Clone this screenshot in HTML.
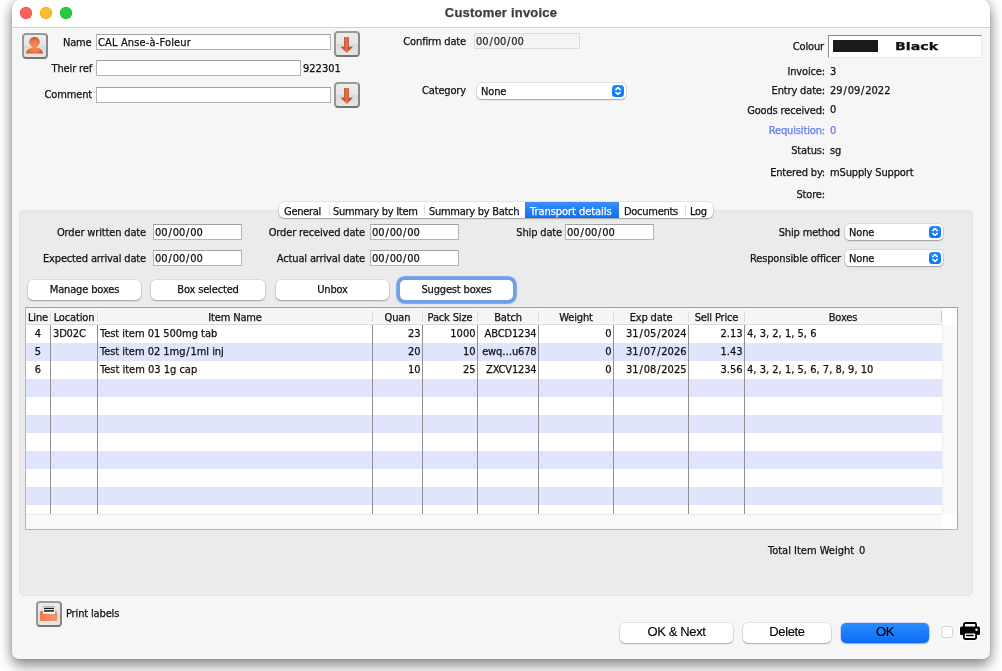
<!DOCTYPE html>
<html><head><meta charset="utf-8"><title>Customer invoice</title>
<style>
*{box-sizing:border-box;margin:0;padding:0}
html,body{width:1002px;height:671px;overflow:hidden;background:#fff}
body{position:relative;font-family:"DejaVu Sans Condensed","DejaVu Sans","Liberation Sans",sans-serif;font-size:11px;color:#111;letter-spacing:-.15px;-webkit-text-stroke:.25px}
.a{position:absolute;white-space:nowrap}
#win{will-change:transform;position:absolute;left:12px;top:0;width:978px;height:659px;background:#f6f6f6;border-radius:7px 7px 7px 7px/10px 10px 7px 7px;
 box-shadow:0 0 0 .5px rgba(0,0,0,.10),0 8px 13px rgba(0,0,0,.34),0 0 14px rgba(0,0,0,.27)}
#tb{position:absolute;left:0;top:0;width:978px;height:28px;background:#fff;border-radius:7px 7px 0 0/10px 10px 0 0;border-bottom:1px solid #d1d1d1}
#title{position:absolute;left:0;width:978px;top:5px;text-align:center;font:bold 13px "Liberation Sans",sans-serif;color:#3d3d3d;letter-spacing:.2px}
.tl{position:absolute;top:7px;width:12px;height:12px;border-radius:50%}
.l{position:absolute;white-space:nowrap;text-align:right;line-height:14px;height:14px;margin-top:1px}
.v{position:absolute;white-space:nowrap;line-height:14px;height:14px;margin-top:1px}
.in{position:absolute;background:#fff;border:1px solid #b4b4b4;border-top-color:#a2a2a2;height:16px;line-height:14px;padding:1px 0 0 1px;white-space:nowrap}
.sel{position:absolute;background:#fff;border-radius:4.5px;height:16px;line-height:14px;padding:2px 0 0 4px;box-shadow:0 0 0 .5px rgba(0,0,0,.16),0 1px 1.5px rgba(0,0,0,.28)}
.sel i{position:absolute;right:2px;top:2px;width:12px;height:12px;border-radius:3.500px;background:linear-gradient(#2489ff,#0a75fa)}
.sel i svg{position:absolute;left:0;top:0}
.ib{position:absolute;width:26px;height:25.500px;border-radius:4px;border:2px solid;border-color:#9a9a9a #888 #747474 #969696;background:linear-gradient(#ececec,#e4e4e4 48%,#d9d9d9 52%,#e6e6e6)}
.ib svg{position:absolute;left:0;top:0}
.btn{position:absolute;background:#fff;border-radius:5px;height:20px;line-height:20px;text-align:center;box-shadow:0 0 0 .5px rgba(0,0,0,.14),0 1px 1.5px rgba(0,0,0,.26)}
.hb{font:13px "Liberation Sans",sans-serif;color:#000;height:20.500px;line-height:18px;letter-spacing:-.38px;-webkit-text-stroke:.12px}
#panel{position:absolute;left:7px;top:210px;width:954px;height:386px;background:#ebebeb;border:1px solid #e3e3e3;border-radius:5px}
#tabs{position:absolute;left:267px;top:202px;width:433.500px;height:16px;background:#fff;border-radius:5px;box-shadow:0 0 0 .5px rgba(0,0,0,.14),0 1px 1.5px rgba(0,0,0,.26)}
#tabs span{position:absolute;top:3px;height:14px;line-height:14px;white-space:nowrap;letter-spacing:-.28px}
#tabs em{position:absolute;top:0;height:16px;background:linear-gradient(#3a8ffa,#0d6ff5)}
#tabs b{position:absolute;top:3px;width:1px;height:10px;background:#dcdcdc}
#tbl{position:absolute;left:13px;top:307px;width:933px;height:223px;background:#fff;border:1px solid #b4b4b4;border-top-color:#a0a0a0;border-right-color:#a6a6a6}
.n{letter-spacing:0}
u{text-decoration:none;margin:0 .85px}
.row{position:absolute;left:0;width:916px;height:18px}
.bl{background:#e0e4fc}
.cs{position:absolute;top:17px;width:1px;height:189px;background:#8f8f8f}
.hs{position:absolute;top:3px;width:1px;height:11px;background:#dedede}
.h{position:absolute;top:3px;line-height:14px;text-align:center;white-space:nowrap}
.c{position:absolute;line-height:14px;white-space:nowrap}
</style></head><body>
<div id="win">
<div id="tb">
 <div class="tl" style="left:8px;background:#fe5f57;box-shadow:inset 0 0 0 .5px #e0443e"></div>
 <div class="tl" style="left:28px;background:#febc2e;box-shadow:inset 0 0 0 .5px #dea123"></div>
 <div class="tl" style="left:48px;background:#28c840;box-shadow:inset 0 0 0 .5px #1aab29"></div>
 <div id="title">Customer invoice</div>
</div>
<div class="ib" style="left:10px;top:33px"><svg width="22" height="22" viewBox="0 0 22 22"><defs><radialGradient id="og" gradientUnits="userSpaceOnUse" cx="10.500" cy="11.500" r="10"><stop offset="0" stop-color="#f48e5a"/><stop offset=".55" stop-color="#ec7d4a"/><stop offset="1" stop-color="#c65026"/></radialGradient></defs><path d="M2.200 18.600C2.200 15.300 4.300 13.700 7 13 8 12.700 8.600 12.300 8.500 11.700 6.500 10.800 5.200 9.100 5.200 7 5.200 4.100 7.600 1.900 10.500 1.900S15.800 4.100 15.800 7C15.800 9.100 14.500 10.800 12.500 11.700 12.400 12.300 13 12.700 14 13 16.700 13.700 18.900 15.300 18.900 18.600z" fill="url(#og)"/></svg></div>
<svg width="0" height="0" style="position:absolute"><defs><linearGradient id="ag" gradientUnits="userSpaceOnUse" x1="7.500" y1="0" x2="13.500" y2="0"><stop offset="0" stop-color="#b9452a"/><stop offset=".5" stop-color="#e5744f"/><stop offset="1" stop-color="#c24c2c"/></linearGradient></defs></svg>
<div class="l" style="left:0;width:79.500px;top:35px">Name</div>
<div class="in" style="left:84px;top:34px;width:235px;letter-spacing:.15px">CAL Anse-à-Foleur</div>
<div class="ib" style="left:322px;top:31px"><svg width="22" height="22" viewBox="0 0 22 22"><path d="M8.100 4.100h4.800v9.700l4.200-.400-6.300 6.600-6.300-6.600 3.600.400z" fill="url(#ag)"/></svg></div>
<div class="l" style="left:0;width:80px;top:61px">Their ref</div>
<div class="in" style="left:84px;top:60px;width:205px"></div>
<div class="v n" style="left:291px;top:61px">922301</div>
<div class="l" style="left:0;width:80px;top:87px">Comment</div>
<div class="in" style="left:84px;top:87px;width:235px"></div>
<div class="ib" style="left:322px;top:82px"><svg width="22" height="22" viewBox="0 0 22 22"><path d="M8.100 4.100h4.800v9.700l4.200-.400-6.300 6.600-6.300-6.600 3.600.400z" fill="url(#ag)"/></svg></div>

<div class="l" style="left:354px;width:100px;top:34px">Confirm date</div>
<div class="in" style="left:462px;top:33px;width:106px;height:16px;background:#f4f4f4;border-color:#dcdcdc;color:#2a2a2a;letter-spacing:0">00<u>/</u>00<u>/</u>00</div>
<div class="l" style="left:354px;width:100px;top:83px">Category</div>
<div class="sel" style="left:465px;top:83px;width:149px">None<i><svg width="12" height="12" viewBox="0 0 12 12"><path d="M3.800 4.600L6 2.600l2.200 2M3.800 7.400L6 9.400l2.200-2" fill="none" stroke="#fff" stroke-width="1.500" stroke-linecap="round" stroke-linejoin="round"/></svg></i></div>

<div class="l" style="left:713px;width:99px;top:39px">Colour</div>
<div class="a" style="left:816px;top:35px;width:154px;height:22.500px;background:#fff;border:1px solid #ececec;border-top-color:#8c8c8c;border-left-color:#8c8c8c"></div>
<div class="a" style="left:821px;top:40px;width:45px;height:12px;background:#1b1a1c"></div>
<div class="a" style="left:883px;top:40px;font:bold 11px 'DejaVu Sans',sans-serif;line-height:14px;color:#111;letter-spacing:0;transform:scaleX(1.29);transform-origin:0 0">Black</div>
<div class="l" style="left:713px;width:100px;top:64px">Invoice:</div><div class="v" style="left:818px;top:64px">3</div>
<div class="l" style="left:713px;width:100px;top:83px">Entry date:</div><div class="v n" style="left:818px;top:83px">29<u>/</u>09<u>/</u>2022</div>
<div class="l" style="left:713px;width:100px;top:103px">Goods received:</div><div class="v" style="left:818px;top:102px">0</div>
<div class="l" style="left:713px;width:100px;top:123px;color:#5f7fea">Requisition:</div><div class="v" style="left:818px;top:123px;color:#5f7fea">0</div>
<div class="l" style="left:713px;width:100px;top:143px">Status:</div><div class="v" style="left:818px;top:143px">sg</div>
<div class="l" style="left:713px;width:100px;top:165px">Entered by:</div><div class="v" style="left:818px;top:165px">mSupply Support</div>
<div class="l" style="left:713px;width:100px;top:187px">Store:</div>

<div id="panel"></div>
<div id="tabs">
 <span style="left:5px">General</span><b style="left:50px"></b>
 <span style="left:54px">Summary by Item</span><b style="left:145px"></b>
 <span style="left:150px">Summary by Batch</span>
 <em style="left:246px;width:94px"></em><span style="left:251px;color:#fff;letter-spacing:-.05px">Transport details</span>
 <span style="left:345px">Documents</span><b style="left:406px"></b>
 <span style="left:411px">Log</span>
</div>
<div class="l" style="left:20px;width:114px;top:225px">Order written date</div>
<div class="in" style="left:141px;top:224px;width:89px;letter-spacing:0">00<u>/</u>00<u>/</u>00</div>
<div class="l" style="left:20px;width:114px;top:251px">Expected arrival date</div>
<div class="in" style="left:141px;top:250px;width:89px;letter-spacing:0">00<u>/</u>00<u>/</u>00</div>
<div class="l" style="left:233px;width:120px;top:225px">Order received date</div>
<div class="in" style="left:358px;top:224px;width:89px;letter-spacing:0">00<u>/</u>00<u>/</u>00</div>
<div class="l" style="left:233px;width:120px;top:251px">Actual arrival date</div>
<div class="in" style="left:358px;top:250px;width:89px;letter-spacing:0">00<u>/</u>00<u>/</u>00</div>
<div class="l" style="left:450px;width:100px;top:225px">Ship date</div>
<div class="in" style="left:553px;top:224px;width:89px;letter-spacing:0">00<u>/</u>00<u>/</u>00</div>
<div class="l" style="left:708px;width:120px;top:225px">Ship method</div>
<div class="sel" style="left:833px;top:224px;width:98px">None<i><svg width="12" height="12" viewBox="0 0 12 12"><path d="M3.800 4.600L6 2.600l2.200 2M3.800 7.400L6 9.400l2.200-2" fill="none" stroke="#fff" stroke-width="1.500" stroke-linecap="round" stroke-linejoin="round"/></svg></i></div>
<div class="l" style="left:708px;width:121px;top:251px">Responsible officer</div>
<div class="sel" style="left:833px;top:250px;width:98px">None<i><svg width="12" height="12" viewBox="0 0 12 12"><path d="M3.800 4.600L6 2.600l2.200 2M3.800 7.400L6 9.400l2.200-2" fill="none" stroke="#fff" stroke-width="1.500" stroke-linecap="round" stroke-linejoin="round"/></svg></i></div>

<div class="btn" style="left:16px;top:280px;width:113px">Manage boxes</div>
<div class="btn" style="left:139px;top:280px;width:114px">Box selected</div>
<div class="btn" style="left:264px;top:280px;width:113px">Unbox</div>
<div class="btn" style="left:388px;top:280px;width:113px;box-shadow:0 0 0 3.400px #6f9fe9,0 0 1px 3.800px #8fb4ef">Suggest boxes</div>

<div id="tbl">
 <div class="a" style="left:0;top:0;width:916px;height:16px;background:#f5f5f5"></div>
<div class="a" style="left:0;top:16px;width:916px;height:1px;background:#dcdcdc"></div>
<div class="row bl" style="top:35px"></div>
<div class="row bl" style="top:71px"></div>
<div class="row bl" style="top:107px"></div>
<div class="row bl" style="top:143px"></div>
<div class="row bl" style="top:179px"></div>
<div class="a" style="left:916px;top:17px;width:15px;height:189px;background:#f9f9f9;border-left:1px solid #ededed"></div>
<div class="a" style="left:0;top:206px;width:916px;height:15px;background:#f9f9f9;border-top:1px solid #e8e8e8"></div>
<div class="cs" style="left:24px"></div>
<div class="hs" style="left:24px"></div>
<div class="cs" style="left:71px"></div>
<div class="hs" style="left:71px"></div>
<div class="cs" style="left:346px"></div>
<div class="hs" style="left:346px"></div>
<div class="cs" style="left:396px"></div>
<div class="hs" style="left:396px"></div>
<div class="cs" style="left:451px"></div>
<div class="hs" style="left:451px"></div>
<div class="cs" style="left:512px"></div>
<div class="hs" style="left:512px"></div>
<div class="cs" style="left:587px"></div>
<div class="hs" style="left:587px"></div>
<div class="cs" style="left:662px"></div>
<div class="hs" style="left:662px"></div>
<div class="cs" style="left:718px"></div>
<div class="hs" style="left:718px"></div>
<div class="hs" style="left:915px;background:#c2c2c2"></div>
<div class="h" style="left:0px;width:24px">Line</div>
<div class="h" style="left:25px;width:46px">Location</div>
<div class="h" style="left:72px;width:274px">Item Name</div>
<div class="h" style="left:347px;width:49px">Quan</div>
<div class="h" style="left:397px;width:54px">Pack Size</div>
<div class="h" style="left:452px;width:60px">Batch</div>
<div class="h" style="left:513px;width:74px">Weight</div>
<div class="h" style="left:588px;width:74px">Exp date</div>
<div class="h" style="left:663px;width:55px">Sell Price</div>
<div class="h" style="left:719px;width:196px">Boxes</div>
<div class="c n" style="top:19px;left:0px;width:24px;text-align:center">4</div>
<div class="c" style="top:19px;left:27px">3D02C</div>
<div class="c" style="top:19px;left:74px;letter-spacing:-.03px">Test item 01 500mg tab</div>
<div class="c n" style="top:19px;left:347px;width:47.5px;text-align:right">23</div>
<div class="c n" style="top:19px;left:397px;width:52.5px;text-align:right">1000</div>
<div class="c" style="top:19px;left:452px;width:58.5px;text-align:right">ABCD1234</div>
<div class="c n" style="top:19px;left:513px;width:72.5px;text-align:right">0</div>
<div class="c n" style="top:19px;left:588px;width:72.5px;text-align:right">31<u>/</u>05<u>/</u>2024</div>
<div class="c n" style="top:19px;left:663px;width:53.5px;text-align:right">2.13</div>
<div class="c" style="top:19px;left:721px;letter-spacing:.02px">4, 3, 2, 1, 5, 6</div>
<div class="c n" style="top:37px;left:0px;width:24px;text-align:center">5</div>
<div class="c" style="top:37px;left:74px;letter-spacing:-.03px">Test item 02 1mg<u>/</u>1ml inj</div>
<div class="c n" style="top:37px;left:347px;width:47.5px;text-align:right">20</div>
<div class="c n" style="top:37px;left:397px;width:52.5px;text-align:right">10</div>
<div class="c" style="top:37px;left:452px;width:58.5px;text-align:right">ewq…u678</div>
<div class="c n" style="top:37px;left:513px;width:72.5px;text-align:right">0</div>
<div class="c n" style="top:37px;left:588px;width:72.5px;text-align:right">31<u>/</u>07<u>/</u>2026</div>
<div class="c n" style="top:37px;left:663px;width:53.5px;text-align:right">1.43</div>
<div class="c n" style="top:55px;left:0px;width:24px;text-align:center">6</div>
<div class="c" style="top:55px;left:74px;letter-spacing:0">Test item 03 1g cap</div>
<div class="c n" style="top:55px;left:347px;width:47.5px;text-align:right">10</div>
<div class="c n" style="top:55px;left:397px;width:52.5px;text-align:right">25</div>
<div class="c" style="top:55px;left:452px;width:58.5px;text-align:right">ZXCV1234</div>
<div class="c n" style="top:55px;left:513px;width:72.5px;text-align:right">0</div>
<div class="c n" style="top:55px;left:588px;width:72.5px;text-align:right">31<u>/</u>08<u>/</u>2025</div>
<div class="c n" style="top:55px;left:663px;width:53.5px;text-align:right">3.56</div>
<div class="c" style="top:55px;left:721px;letter-spacing:.02px">4, 3, 2, 1, 5, 6, 7, 8, 9, 10</div>
</div>
<div class="v" style="left:756px;top:543px;letter-spacing:0">Total Item Weight</div><div class="v" style="left:847px;top:543px">0</div>

<div class="ib" style="left:24px;top:601px"><svg width="22" height="22" viewBox="0 0 22 22"><defs><linearGradient id="pg" x1="0" y1="0" x2="1" y2="0"><stop offset="0" stop-color="#e8703b"/><stop offset=".15" stop-color="#ef7e49"/><stop offset=".85" stop-color="#f3966c"/><stop offset="1" stop-color="#e88154"/></linearGradient><linearGradient id="pp" x1="0" y1="0" x2="0" y2="1"><stop offset="0" stop-color="#9a9a9a"/><stop offset=".25" stop-color="#f4f4f4"/><stop offset="1" stop-color="#fff"/></linearGradient></defs><rect x="2.150" y="8" width="16.750" height="9.900" rx="1.200" fill="url(#pg)"/><rect x="5.100" y="3.200" width="11.800" height="7.600" fill="url(#pp)"/><rect x="6" y="4.900" width="9.900" height="1.200" fill="#111"/><rect x="6" y="7.200" width="9.900" height="1.500" fill="#111"/></svg></div>
<div class="v" style="left:54px;top:606px">Print labels</div>
<div class="btn hb" style="left:608px;top:622.500px;width:113px">OK &amp; Next</div>
<div class="btn hb" style="left:731px;top:622.500px;width:88px">Delete</div>
<div class="btn hb" style="left:829px;top:623px;width:88px;height:20px;line-height:17.500px;background:linear-gradient(#2b8cff,#0b6df6);box-shadow:0 0 0 .5px rgba(0,80,200,.3),0 1px 1.5px rgba(0,0,0,.25)">OK</div>
<div class="a" style="left:929px;top:626px;width:12px;height:11.500px;background:#fff;border-radius:3px;border:1px solid #d4d4d4"></div>
<svg class="a" style="left:946px;top:620px" width="24" height="22" viewBox="0 0 24 22"><g fill="none" stroke="#fff" stroke-width="2.200" stroke-linejoin="round"><rect x="5" y="2.100" width="14" height="7" rx="2"/><rect x="2" y="6.600" width="20" height="8.400" rx="1.600"/><rect x="5" y="11.700" width="14" height="8.200" rx="2"/></g><rect x="5.900" y="3" width="12.200" height="6" rx="1.400" fill="#fff" stroke="#000" stroke-width="1.800"/><rect x="2" y="6.600" width="20" height="8.400" rx="1.600" fill="#000"/><circle cx="18.500" cy="9.700" r="1.200" fill="#fff"/><rect x="5.900" y="12.600" width="12.200" height="6.400" rx="1.400" fill="#fff" stroke="#000" stroke-width="1.800"/><rect x="8" y="14.700" width="7.800" height="1.600" rx=".8" fill="#000"/></svg>

</div>
</body></html>
